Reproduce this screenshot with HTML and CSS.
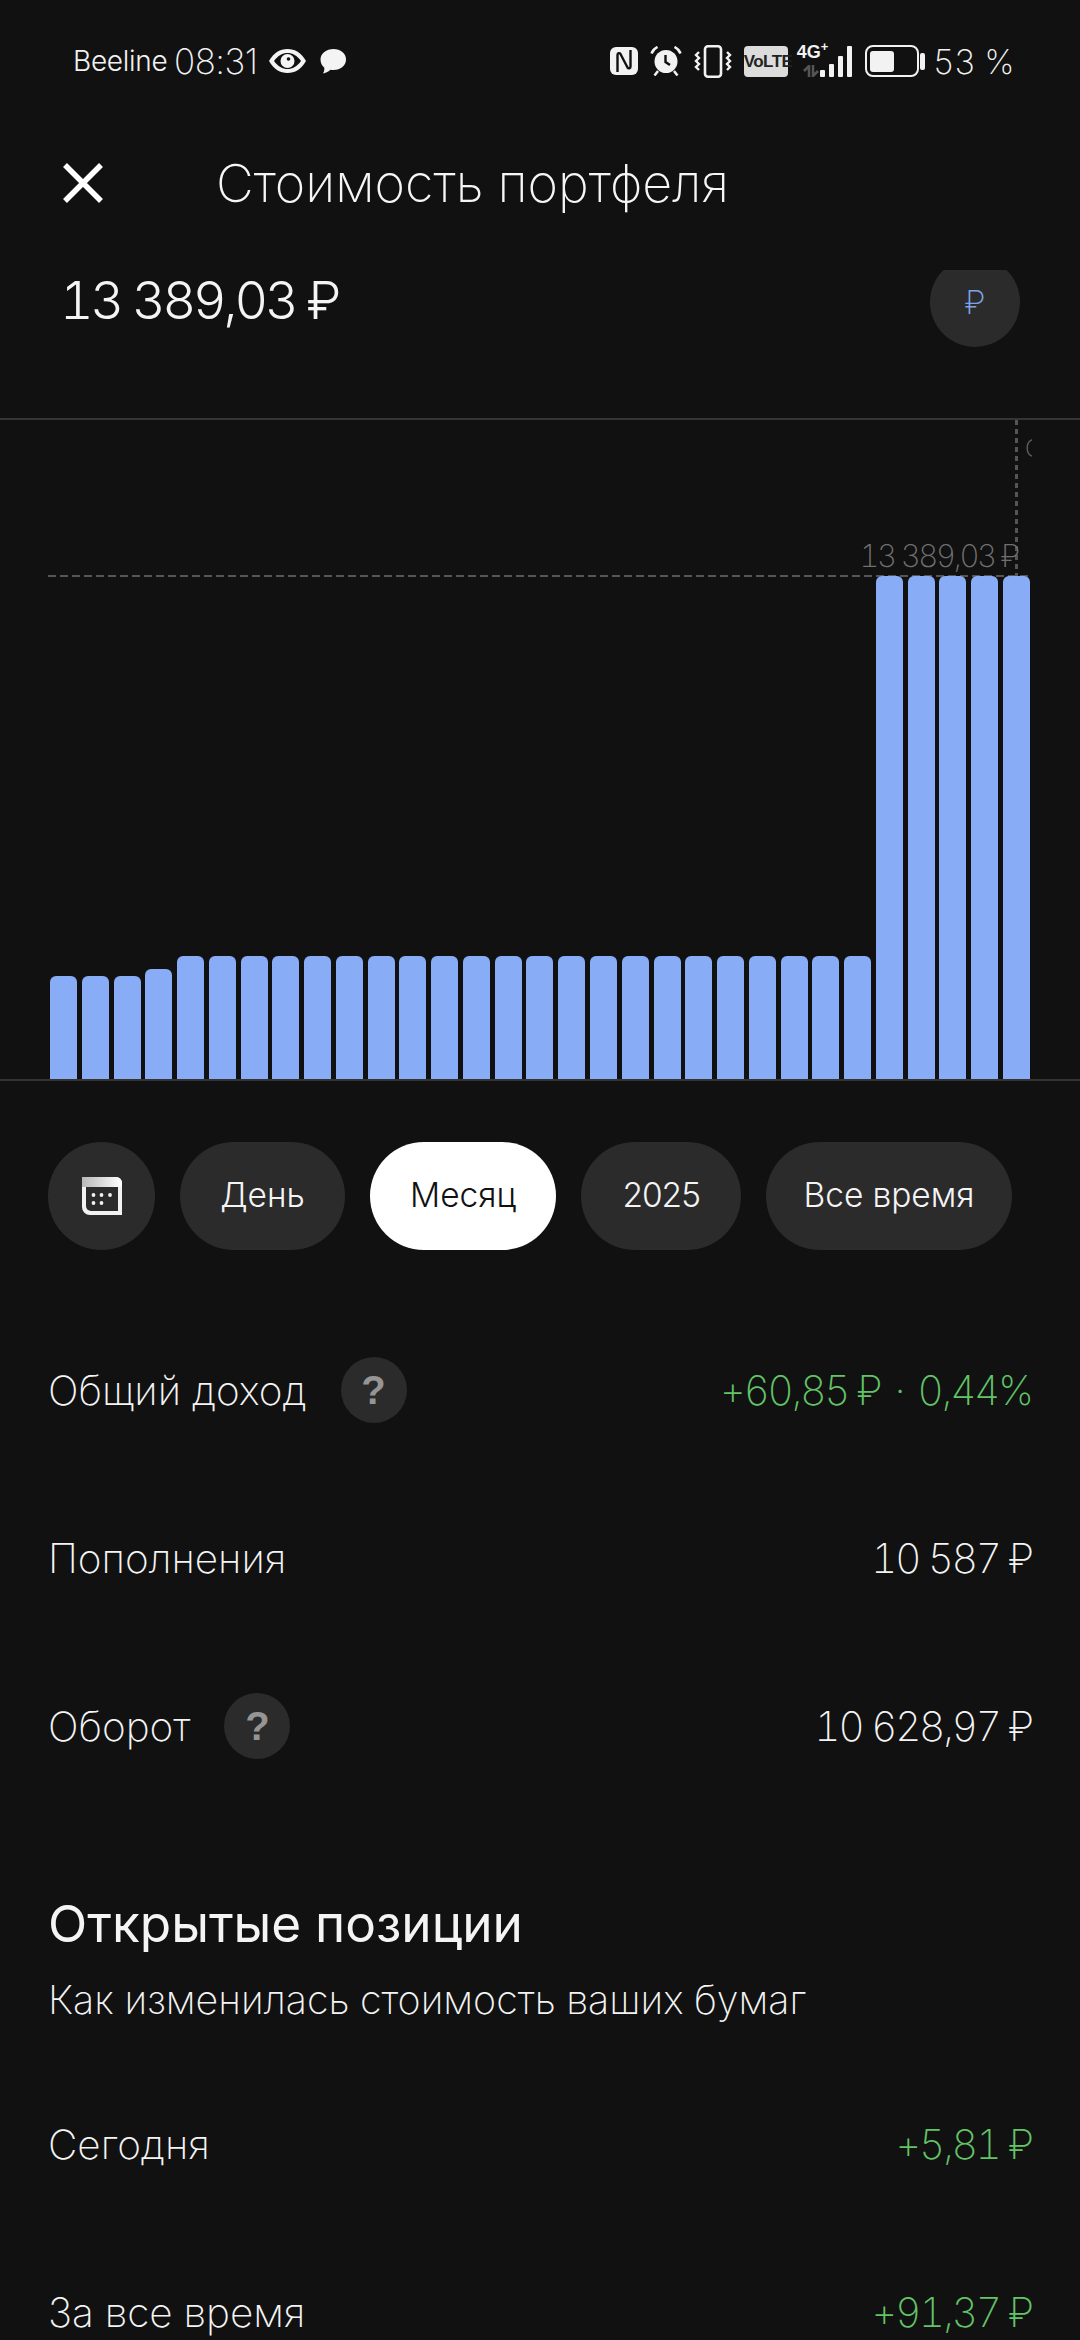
FILE: index.html
```html
<!DOCTYPE html>
<html lang="ru">
<head>
    <meta charset="utf-8">
    <title>Стоимость портфеля</title>
    <link rel="stylesheet" href="styles.css">
</head>
<body>

<div class="status">
    <span class="carrier">Beeline</span>
    <span class="clock">08:31</span>
    <svg class="ic-eye" width="39" height="26" viewBox="0 0 39 26"><path d="M1 13C6 4.500 12 1 19.500 1S33 4.500 38 13c-5 8.500-11 12-18.500 12S6 21.500 1 13z" fill="#f4f4f4"/><path d="M6 13c4-5.500 8.500-8 13.500-8S29 7.500 33 13c-4 5.500-8.500 8-13.500 8S10 18.500 6 13z" fill="#111"/><circle cx="19.500" cy="13" r="7" fill="#f4f4f4"/><circle cx="20.500" cy="11" r="1.800" fill="#111"/></svg>
    <svg class="ic-msg" width="28" height="26" viewBox="0 0 28 26"><path d="M14.500 1C21.500 1 27 5.500 27 11.500S21.500 22 14.500 22c-1 0-2 0-3-.2C9 24 6.500 25.200 4 25.500c1-1.500 1.500-3.500 1.300-5.800C3 17.700 1.500 15 1.500 11.500 1.500 5.500 7.500 1 14.500 1z" fill="#f4f4f4"/></svg>
    <span class="status-gap"></span>
    <svg class="ic-nfc" width="28" height="28" viewBox="0 0 28 28"><rect width="28" height="28" rx="6" fill="#f2f2f2"/><path d="M7.500 25V8c0-2 2-2.500 3-1l7 13.500c1 1.500 3 1 3-1V3" fill="none" stroke="#111" stroke-width="2.400"/></svg>
    <svg class="ic-alarm" width="32" height="30" viewBox="0 0 32 30"><circle cx="16" cy="15.500" r="11.500" fill="#f2f2f2"/><path d="M15.500 9v7l4.500 3" fill="none" stroke="#111" stroke-width="2.400"/><path d="M1.500 7.500c1-3 3-5 6-6.500M30.500 7.500c-1-3-3-5-6-6.500M8 25l-3.500 4.500M24 25l3.500 4.500" fill="none" stroke="#f2f2f2" stroke-width="2.500"/></svg>
    <svg class="ic-vib" width="38" height="33" viewBox="0 0 38 33"><rect x="11" y="1.300" width="16" height="30.400" rx="3" fill="none" stroke="#f2f2f2" stroke-width="2.600"/><path d="M5 7L2 10l3 3-3 3 3 3-3 3 3 3M33 7l3 3-3 3 3 3-3 3 3 3-3 3" fill="none" stroke="#f2f2f2" stroke-width="2.400"/></svg>
    <span class="volte">VoLTE</span>
    <span class="net">
        <span class="net-4g">4G<sup>+</sup></span>
        <svg class="net-arrows" width="16" height="12" viewBox="0 0 16 12"><path d="M6 12V1L1 6M10 0v11l5-5" fill="none" stroke="#555" stroke-width="2.600"/></svg>
        <span class="sig s1"></span><span class="sig s2"></span><span class="sig s3"></span><span class="sig s4"></span>
    </span>
    <span class="battery"><span class="battery-level"></span></span>
    <span class="battery-tip"></span>
    <span class="percent">53 %</span>
</div>

<div class="nav">
    <svg class="close" width="42" height="42" viewBox="0 0 42 42"><path d="M3 3l36 36M39 3L3 39" stroke="#fff" stroke-width="5.500" fill="none"/></svg>
    <span class="nav-title">Стоимость портфеля</span>
</div>

<div class="summary">
    <span class="total">13 389,03 ₽</span>
    <span class="currency">₽</span>
</div>

<div class="chart">
    <div class="guide-h"></div>
    <div class="guide-v"></div>
    <span class="guide-label">13 389,03 ₽</span>
    <span class="guide-cut">С</span>
    <div class="bars">
        <i class="b low"></i><i class="b low"></i><i class="b low"></i><i class="b step"></i>
        <i class="b mid"></i><i class="b mid"></i><i class="b mid"></i><i class="b mid"></i><i class="b mid"></i>
        <i class="b mid"></i><i class="b mid"></i><i class="b mid"></i><i class="b mid"></i><i class="b mid"></i>
        <i class="b mid"></i><i class="b mid"></i><i class="b mid"></i><i class="b mid"></i><i class="b mid"></i>
        <i class="b mid"></i><i class="b mid"></i><i class="b mid"></i><i class="b mid"></i><i class="b mid"></i>
        <i class="b mid"></i><i class="b mid"></i>
        <i class="b tall"></i><i class="b tall"></i><i class="b tall"></i><i class="b tall"></i><i class="b tall"></i>
    </div>
</div>

<div class="periods">
    <span class="pill pill-cal">
        <svg width="40" height="38" viewBox="0 0 40 38">
            <defs><linearGradient id="calTop" x1="0" y1="0" x2="1" y2="0"><stop offset="0" stop-color="#b8b8b8"/><stop offset="1" stop-color="#fff"/></linearGradient></defs>
            <path d="M0 0h34a6 6 0 0 1 6 6v32H8a8 8 0 0 1-8-8z" fill="#f2f2f2"/>
            <path d="M0 0h34a6 6 0 0 1 6 6v4H0z" fill="url(#calTop)"/>
            <path d="M4 10h32v24H9a5 5 0 0 1-5-5z" fill="#2b2b2b"/>
            <g fill="#f2f2f2"><circle cx="11.500" cy="18" r="1.900"/><circle cx="19.500" cy="18" r="1.900"/><circle cx="28" cy="18" r="1.900"/><circle cx="11.500" cy="26" r="1.900"/><circle cx="19.500" cy="26" r="1.900"/></g>
        </svg>
    </span>
    <span class="pill pill-day">День</span>
    <span class="pill pill-month active">Месяц</span>
    <span class="pill pill-year">2025</span>
    <span class="pill pill-all">Все время</span>
</div>

<div class="row">
    <span class="row-name">Общий доход</span>
    <span class="help">?</span>
    <span class="row-val green">+60,85 ₽<span class="dot">·</span>0,44%</span>
</div>
<div class="row">
    <span class="row-name">Пополнения</span>
    <span class="row-val">10 587 ₽</span>
</div>
<div class="row">
    <span class="row-name">Оборот</span>
    <span class="help">?</span>
    <span class="row-val">10 628,97 ₽</span>
</div>

<h2 class="section">Открытые позиции</h2>
<p class="section-sub">Как изменилась стоимость ваших бумаг</p>

<div class="row row-today">
    <span class="row-name">Сегодня</span>
    <span class="row-val green">+5,81 ₽</span>
</div>
<div class="row">
    <span class="row-name">За все время</span>
    <span class="row-val green">+91,37 ₽</span>
</div>

</body>
</html>
```

FILE: styles.css
```css
html, body {
    margin: 0;
    height: 2340px;
    overflow: hidden;
}
body {
    background: #111;
    color: #f4f4f4;
    font-family: Inter, "Noto Sans", sans-serif;
    font-weight: 250;
    font-variant-numeric: tabular-nums;
}

/* status bar */
.status {
    height: 122px;
    box-sizing: border-box;
    padding: 0 66px 0 73px;
    display: flex;
    align-items: center;
    color: #f2f2f2;
}
.carrier { width: 101px; font-size: 28px; font-weight: 300; letter-spacing: -0.3px; }
.clock { width: 94px; font-size: 35px; font-variant-numeric: normal; letter-spacing: -0.5px; }
.ic-msg { margin-left: 12px; }
.status-gap { flex: 1; }
.ic-alarm { margin-left: 12px; }
.ic-vib { margin-left: 12px; }
.volte {
    margin-left: 12px;
    width: 44px;
    height: 31px;
    line-height: 31px;
    background: #dcdcdc;
    color: #222;
    border-radius: 4px;
    font-family: "Liberation Sans Narrow", "Liberation Sans", sans-serif;
    font-size: 17px;
    font-weight: bold;
    letter-spacing: -0.5px;
    text-align: center;
}
.net {
    position: relative;
    margin-left: 9px;
    width: 55px;
    height: 32px;
    display: flex;
    align-items: flex-end;
    justify-content: flex-end;
    gap: 4.500px;
}
.net-4g {
    position: absolute;
    left: 0;
    top: -2px;
    font-family: "Liberation Sans Narrow", "Liberation Sans", sans-serif;
    font-size: 18px;
    font-weight: bold;
    line-height: 18px;
}
.net-4g sup { font-size: 13px; line-height: 0; }
.net-arrows {
    position: absolute;
    left: 6px;
    bottom: 0;
}
.sig { width: 4.500px; background: #f2f2f2; border-radius: 1px; }
.s1 { height: 7px; }
.s2 { height: 13px; }
.s3 { height: 21px; }
.s4 { height: 31px; }
.battery {
    box-sizing: border-box;
    margin-left: 13px;
    width: 54px;
    height: 32px;
    padding: 3.500px;
    border: 2.500px solid #f2f2f2;
    border-radius: 8px;
}
.battery-level {
    display: block;
    width: 24px;
    height: 100%;
    background: #f2f2f2;
    border-radius: 3px;
}
.battery-tip {
    width: 5px;
    height: 17px;
    margin-left: 1px;
    background: #f2f2f2;
    border-radius: 2px;
}
.percent { margin-left: 8px; font-size: 34px; letter-spacing: -0.5px; }

/* header */
.nav {
    height: 148px;
    padding: 0 0 26px 62px;
    box-sizing: border-box;
    display: flex;
    align-items: center;
}
.nav-title {
    margin-left: 112px;
    font-size: 52px;
    color: #f6f6f6;
}
.summary {
    height: 148px;
    overflow: hidden;
    padding: 0 60px 0 60px;
    border-bottom: 2px solid #353535;
    display: flex;
    justify-content: space-between;
    align-items: flex-start;
}
.total {
    margin-top: 1px;
    font-size: 52px;
    font-weight: 300;
    letter-spacing: -3.100px;
    line-height: 60px;
}
.currency {
    width: 90px;
    height: 90px;
    margin-top: -13px;
    border-radius: 50%;
    background: #2b2b2b;
    color: #7fa3e8;
    font-size: 33px;
    line-height: 90px;
    text-align: center;
}

/* chart */
.chart {
    position: relative;
    height: 659px;
    border-bottom: 2px solid #353535;
}
.bars {
    position: absolute;
    left: 50px;
    bottom: 0;
    display: flex;
    align-items: flex-end;
    gap: 4.770px;
}
.b {
    display: block;
    width: 27px;
    background: #88acf5;
    border-radius: 6px 6px 0 0;
}
.low { height: 103px; }
.step { height: 110px; }
.mid { height: 123px; }
.tall { height: 503px; }
.guide-h {
    position: absolute;
    left: 48px;
    width: 984px;
    top: 155px;
    height: 2px;
    background: repeating-linear-gradient(90deg, #555 0 8px, transparent 8px 12px);
}
.guide-v {
    position: absolute;
    left: 1015px;
    top: 0;
    width: 3px;
    height: 156px;
    background: repeating-linear-gradient(180deg, #555 0 5px, transparent 5px 9px);
}
.guide-label {
    position: absolute;
    right: 62px;
    top: 117px;
    font-size: 31px;
    letter-spacing: -2.400px;
    color: #707070;
}
.guide-cut {
    position: absolute;
    left: 1025px;
    width: 7px;
    top: 14px;
    overflow: hidden;
    font-size: 24px;
    color: #707070;
}

/* period pills */
.periods {
    margin-top: 61px;
    padding-left: 48px;
    display: flex;
    gap: 25px;
}
.pill {
    height: 108px;
    line-height: 106px;
    border-radius: 54px;
    background: #2b2b2b;
    text-align: center;
    font-size: 33.500px;
    font-weight: 300;
}
.pill-cal { width: 107px; display: flex; align-items: center; justify-content: center; }
.pill-day { width: 165px; }
.pill-month { width: 186px; }
.pill-year { width: 160px; letter-spacing: -2.200px; }
.pill-all { width: 246px; }
.active { background: #fff; color: #111; }

/* rows */
.row {
    height: 168px;
    padding: 0 48px;
    display: flex;
    align-items: center;
    font-size: 40.500px;
}
.periods + .row { margin-top: 56px; }
.row-val { margin: 0 0 0 auto; letter-spacing: -2.200px; }
.green { color: #62c467; }
.dot { margin: 0 14px; }
.help {
    margin-left: 34px;
    width: 66px;
    height: 66px;
    border-radius: 50%;
    background: #2b2b2b;
    color: #959595;
    font-family: "Liberation Sans", sans-serif;
    font-size: 40px;
    font-weight: bold;
    line-height: 66px;
    text-align: center;
}
.section {
    margin: 83px 48px 0;
    font-size: 51.300px;
    font-weight: 400;
    line-height: 60px;
}
.section-sub {
    margin: 22px 48px 0;
    font-size: 39.400px;
    line-height: 50px;
}
.row-today { margin-top: 35px; }
```
